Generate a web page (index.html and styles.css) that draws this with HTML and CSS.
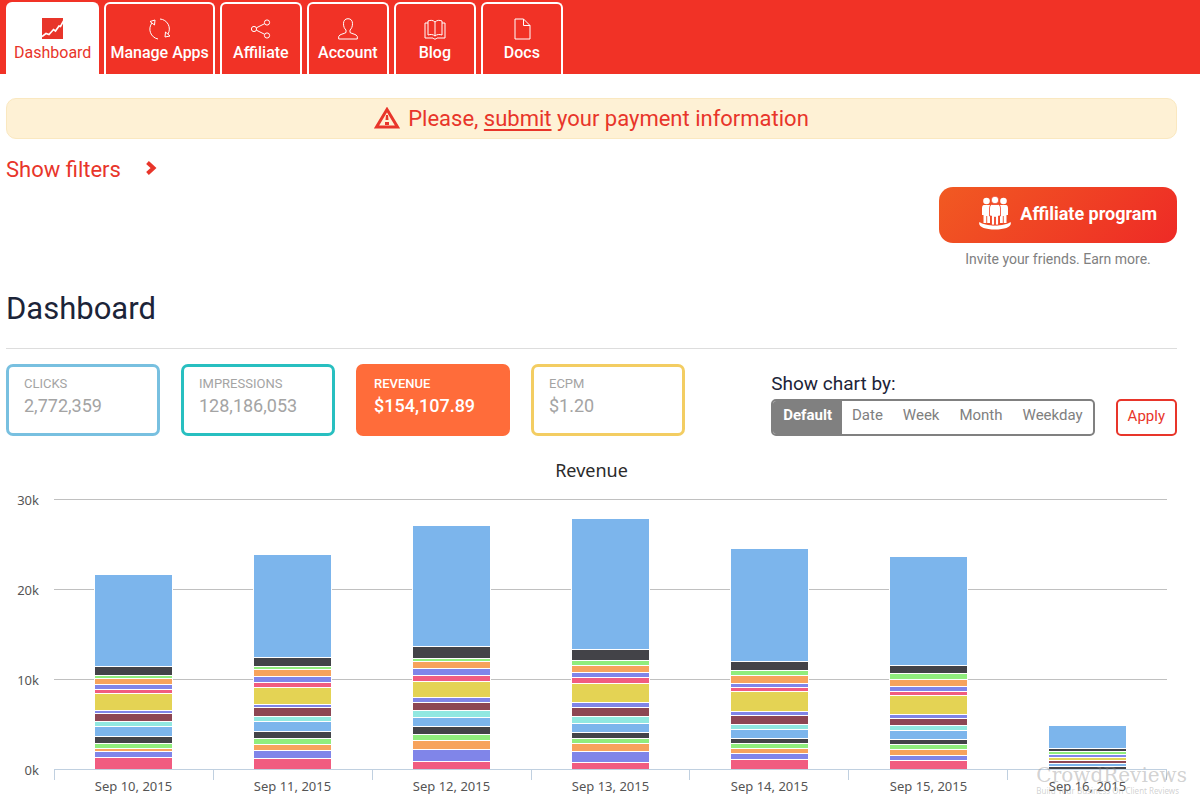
FILE: index.html
```html
<!DOCTYPE html>
<html lang="en">
<head>
    <meta charset="UTF-8">
    <meta name="viewport" content="width=device-width, initial-scale=1.0">
    <title>Dashboard</title>
    <link rel="stylesheet" href="styles.css">
</head>
<body>
    <header>
        <nav class="tabs">
            <a href="#" class="tab active">
                <svg width="22" height="22" viewBox="0 0 22 22"><rect width="21" height="21" fill="#e8352a"/><path d="M0 18.500l4-3 3 1 4.500-5 2 1.500L17 8l1.500.5L21.500 3" fill="none" stroke="#fff" stroke-width="1.600"/></svg>
                Dashboard
            </a>
            <a href="#" class="tab">
                <svg width="22" height="22" viewBox="0 0 22 22" class="line"><path d="M9 21A10 10 0 0 1 3 5M11 1a10 10 0 0 1 8 15M1 3.500l5-1.500-.5 5zM21 18l-5 1 .5-5z"/></svg>
                Manage Apps
            </a>
            <a href="#" class="tab">
                <svg width="22" height="22" viewBox="0 0 22 22" class="line"><circle cx="4" cy="11" r="2.600"/><circle cx="17" cy="4.500" r="2.600"/><circle cx="17" cy="17.500" r="2.600"/><path d="M6.400 9.800l8.200-4.100M6.400 12.200l8.200 4.100"/></svg>
                Affiliate
            </a>
            <a href="#" class="tab">
                <svg width="22" height="22" viewBox="0 0 22 22" class="line"><path d="M11 .7c-3 0-4.500 2-4.500 5 0 3 1 5 2.500 6.300v2.500c-2 1.500-6.500 1.500-7.300 4v2.500h18.600v-2.500c-.8-2.500-5.300-2.500-7.300-4V12c1.500-1.300 2.500-3.300 2.500-6.300 0-3-1.500-5-4.500-5z"/></svg>
                Account
            </a>
            <a href="#" class="tab">
                <svg width="22" height="22" viewBox="0 0 22 22" class="line"><path d="M11 4C9 2 6.500 2 4 3v14c2.500-.8 5-.8 7 1 2-1.800 4.500-1.800 7-1V3c-2.500-1-5-1-7 1zM11 4v14M4 5H1v15h8c1 1.500 3 1.500 4 0h8V5h-3"/></svg>
                Blog
            </a>
            <a href="#" class="tab">
                <svg width="22" height="22" viewBox="0 0 22 22" class="line"><path d="M4 1h8.500L19 7.500V21H4zM12.500 1v6.500H19"/></svg>
                Docs
            </a>
        </nav>
    </header>

    <main>
        <div class="alert">
            <svg width="26" height="24" viewBox="0 0 26 24"><path d="M13 2.500L23.500 20h-21z" fill="none" stroke="#e8352a" stroke-width="3"/><path d="M12 8h2l.5 5h-3zM11 15h4v3h-4z" fill="#e8352a"/></svg>
            <p>Please, <a href="#">submit</a> your payment information</p>
        </div>

        <button type="button" class="filters">
            Show filters
            <svg width="13" height="20" viewBox="0 0 13 20"><path d="M2.500 2.500L8.500 8l-6 5.500" fill="none" stroke="#e8352a" stroke-width="4"/></svg>
        </button>

        <div class="affiliate">
            <button type="button" class="affiliate-btn">
                <svg width="34" height="34" viewBox="0 0 34 34" fill="#fff"><path d="M1.500 26c5 4.500 26 4.500 31 0 2 4.500-5 7.500-15.500 7.500S-.5 30.500 1.500 26z"/><circle cx="8.500" cy="5" r="3.300"/><path d="M5.500 9h6q2 .5 2 3v7h-1.500v8H9.200v-7h-.9v7H5.500v-8H4v-7q0-2.500 1.500-3z"/><circle cx="25.500" cy="5" r="3.300"/><path d="M22.500 9h6q1.500.5 1.500 3v7h-1.500v8h-2.800v-7h-.9v7H22v-8h-1.500v-7q0-2.500 2-3z"/><g stroke="#f03f25" stroke-width=".8"><circle cx="17" cy="4" r="3.800"/><path d="M13.500 8.500h7q2 .5 2 3.500v8h-2v9h-3v-8h-1v8h-3v-9h-2v-8q0-3 2-3.500z"/></g></svg>
                Affiliate program
            </button>
            <p>Invite your friends. Earn more.</p>
        </div>

        <h1>Dashboard</h1>

        <div class="toolbar">
            <div class="stats">
                <button type="button" class="stat clicks"><span>CLICKS</span><b>2,772,359</b></button>
                <button type="button" class="stat impressions"><span>IMPRESSIONS</span><b>128,186,053</b></button>
                <button type="button" class="stat revenue"><span>REVENUE</span><b>$154,107.89</b></button>
                <button type="button" class="stat ecpm"><span>ECPM</span><b>$1.20</b></button>
            </div>
            <form class="chart-by">
                <fieldset>
                    <legend>Show chart by:</legend>
                    <div class="segments">
                        <label><input type="radio" name="by" value="default" checked><span>Default</span></label>
                        <label><input type="radio" name="by" value="date"><span>Date</span></label>
                        <label><input type="radio" name="by" value="week"><span>Week</span></label>
                        <label><input type="radio" name="by" value="month"><span>Month</span></label>
                        <label><input type="radio" name="by" value="weekday"><span>Weekday</span></label>
                    </div>
                </fieldset>
                <button type="button" class="apply">Apply</button>
            </form>
        </div>

        <section class="chart">
            <h2>Revenue</h2>
            <div class="chart-body">
                <div class="y-axis"><span>30k</span><span>20k</span><span>10k</span><span>0k</span></div>
                <div class="plot" id="plot"></div>
            </div>
            <div class="x-axis" id="x-axis"></div>
            <div class="watermark">
                <strong>CrowdReviews</strong>
                <small>Build Your Business On Client Reviews</small>
            </div>
        </section>
    </main>

    <script>
        const colors = ['#7cb5ec', '#434348', '#90ed7d', '#f7a35c', '#8085e9', '#f15c80', '#e4d354', '#8085e8',
            '#8d4653', '#91e8e1', '#7cb5ec', '#434348', '#90ed7d', '#f7a35c', '#8085e9', '#f15c80'];

        // one row per day, top segment first, 9 units = 1k
        const days = [
            ['Sep 10, 2015', [92, 9, 3, 6, 5, 4, 17, 3, 8, 5, 10, 7, 5, 3, 6, 12]],
            ['Sep 11, 2015', [103, 9, 3, 7, 6, 5, 17, 3, 9, 5, 10, 7, 6, 6, 8, 11]],
            ['Sep 12, 2015', [121, 12, 3, 7, 7, 6, 16, 5, 8, 7, 9, 8, 6, 9, 12, 8]],
            ['Sep 13, 2015', [131, 11, 5, 7, 5, 6, 19, 5, 9, 7, 9, 6, 5, 8, 11, 7]],
            ['Sep 14, 2015', [113, 9, 5, 8, 4, 4, 20, 4, 9, 5, 9, 5, 5, 5, 6, 10]],
            ['Sep 15, 2015', [109, 8, 6, 7, 5, 4, 19, 4, 7, 5, 9, 5, 5, 6, 5, 9]],
            ['Sep 16, 2015', [23, 3, 3, 0, 3, 0, 3, 0, 3, 0, 3, 3, 0, 0, 0, 0]]
        ];

        const plot = document.getElementById('plot');
        const xAxis = document.getElementById('x-axis');

        days.forEach(([label, values]) => {
            const bar = document.createElement('div');
            bar.className = 'bar';
            values.forEach((value, i) => {
                if (!value) return;
                const part = document.createElement('div');
                part.className = 'part';
                part.style.height = value + 'px';
                part.style.backgroundColor = colors[i];
                bar.appendChild(part);
            });
            plot.appendChild(bar);

            const tick = document.createElement('span');
            tick.textContent = label;
            xAxis.appendChild(tick);
        });
    </script>
</body>
</html>
```
FILE: styles.css
```css
* {
    box-sizing: border-box;
}

body {
    font-family: Roboto, sans-serif;
    background-color: #fff;
    color: #1c2438;
    margin: 0;
}

h1, h2, p {
    margin: 0;
    font-weight: normal;
}

button {
    font-family: inherit;
    cursor: pointer;
}

header {
    background-color: #f13226;
    height: 74px;
    padding: 2px 6px 0;
}

.tabs {
    display: flex;
    gap: 5px;
    height: 100%;
}

.tab {
    display: flex;
    flex-direction: column;
    align-items: center;
    min-width: 82px;
    padding: 14px 4px 0;
    border: 2px solid #fff;
    border-bottom: none;
    border-radius: 6px 6px 0 0;
    color: #fff;
    font-size: 16px;
    font-weight: 500;
    line-height: 26px;
    text-decoration: none;
    white-space: nowrap;
}

.tab.active {
    padding: 14px 6px 0;
    background-color: #fff;
    color: #e8352a;
    font-weight: normal;
}

.line {
    fill: none;
    stroke: #fff;
    stroke-width: 1;
}

main {
    padding: 24px 23px 0 6px;
}

.alert {
    display: flex;
    justify-content: center;
    align-items: center;
    gap: 8px;
    height: 41px;
    border: 1px solid #fae8c0;
    border-radius: 10px;
    background-color: #fef1d5;
    color: #e8352a;
    font-size: 22px;
    line-height: 38px;
}

.alert a {
    color: inherit;
    text-underline-offset: 3px;
}

.filters {
    display: flex;
    align-items: center;
    gap: 24px;
    margin-top: 16px;
    padding: 0;
    border: none;
    background: none;
    color: #e8352a;
    font-size: 22px;
    line-height: 30px;
}

.affiliate {
    width: 238px;
    margin: 2px 0 0 auto;
    color: #808080;
    font-size: 14px;
    line-height: 32px;
    text-align: center;
}

.affiliate-btn {
    display: flex;
    align-items: center;
    justify-content: flex-end;
    gap: 8px;
    width: 100%;
    height: 56px;
    padding: 0 20px 4px;
    border: none;
    border-radius: 14px;
    background: linear-gradient(135deg, #f15a22, #ee2a26);
    color: #fff;
    font-size: 18px;
    font-weight: bold;
}

h1 {
    margin-top: 12px;
    padding-bottom: 17px;
    border-bottom: 1px solid #ddd;
    font-size: 31px;
    line-height: 44px;
}

.toolbar {
    display: flex;
    justify-content: space-between;
    align-items: flex-end;
    padding-top: 15px;
}

.stats {
    display: flex;
    gap: 21px;
}

.stat {
    display: flex;
    flex-direction: column;
    width: 154px;
    height: 72px;
    padding: 8px 15px;
    border: 3px solid;
    border-radius: 7px;
    background-color: #fff;
    text-align: left;
}

.stat span,
.stat b {
    color: #a4a4a4;
    font-size: 13px;
    font-weight: normal;
    line-height: 18px;
}

.stat b {
    font-size: 18px;
    line-height: 26px;
}

.clicks {
    border-color: #78c0e0;
}

.impressions {
    border-color: #28bfc0;
}

.revenue {
    border-color: #ff6c3a;
    background-color: #ff6c3a;
}

.revenue span,
.revenue b {
    color: #fff;
    font-weight: 500;
}

.ecpm {
    border-color: #f3cd62;
}

.chart-by {
    display: flex;
    align-items: flex-end;
    gap: 21px;
}

fieldset {
    min-width: 0;
    margin: 0;
    padding: 0;
    border: none;
}

legend {
    padding: 0;
    font-size: 19px;
    line-height: 30px;
}

.segments {
    display: flex;
    overflow: hidden;
    height: 37px;
    border: 2px solid #808080;
    border-radius: 5px;
}

.segments label {
    flex: 1 0 auto;
    cursor: pointer;
}

.segments input {
    position: absolute;
    opacity: 0;
}

.segments span {
    display: block;
    padding: 0 10px;
    color: #808080;
    font-size: 15px;
    line-height: 28px;
    height: 100%;
}

.segments input:checked + span {
    background-color: #808080;
    color: #fff;
    font-weight: bold;
}

.apply {
    height: 37px;
    padding: 0 10px 4px;
    border: 2px solid #e8352a;
    border-radius: 5px;
    background-color: #fff;
    color: #e8352a;
    font-size: 15px;
}

.chart {
    position: relative;
    padding: 22px 10px 0;
    color: #555;
    font-family: "Noto Sans", "Open Sans", sans-serif;
    font-size: 13px;
}

.chart h2 {
    color: #2a2a2a;
    font-size: 18px;
    line-height: 24px;
    text-align: center;
}

.chart-body {
    display: flex;
    padding-top: 17px;
}

.y-axis {
    display: flex;
    flex-direction: column;
    justify-content: space-between;
    width: 38px;
    height: 290px;
    margin: -9px 0 -10px;
    padding-right: 15px;
    line-height: 20px;
    text-align: right;
}

.plot {
    display: grid;
    grid-template-columns: repeat(7, 1fr);
    align-items: end;
    flex: 1;
    height: 271px;
    border-bottom: 1px solid #c0d0e0;
    background: repeating-linear-gradient(#c0c0c0 0 1px, transparent 1px 90px);
}

.bar {
    width: 50%;
    margin: 0 auto;
    padding: 0 1px;
    background-color: #fff;
}

.part {
    border-top: 1px solid #fff;
}

.x-axis {
    display: grid;
    grid-template-columns: repeat(7, 1fr);
    margin-left: 38px;
    line-height: 32px;
    text-align: center;
    background: repeating-linear-gradient(to right, #c0d0e0 0 1px, transparent 1px calc((100% - 1px) / 7)) top / 100% 10px no-repeat;
}

.watermark {
    position: absolute;
    right: -10px;
    bottom: 6px;
    display: flex;
    flex-direction: column;
    color: rgba(140, 140, 140, 0.4);
    font-family: "DejaVu Serif", serif;
}

.watermark strong {
    font-size: 20px;
    font-weight: normal;
    line-height: 22px;
}

.watermark small {
    font-family: "Noto Sans", sans-serif;
    font-size: 8px;
    line-height: 10px;
}
```
